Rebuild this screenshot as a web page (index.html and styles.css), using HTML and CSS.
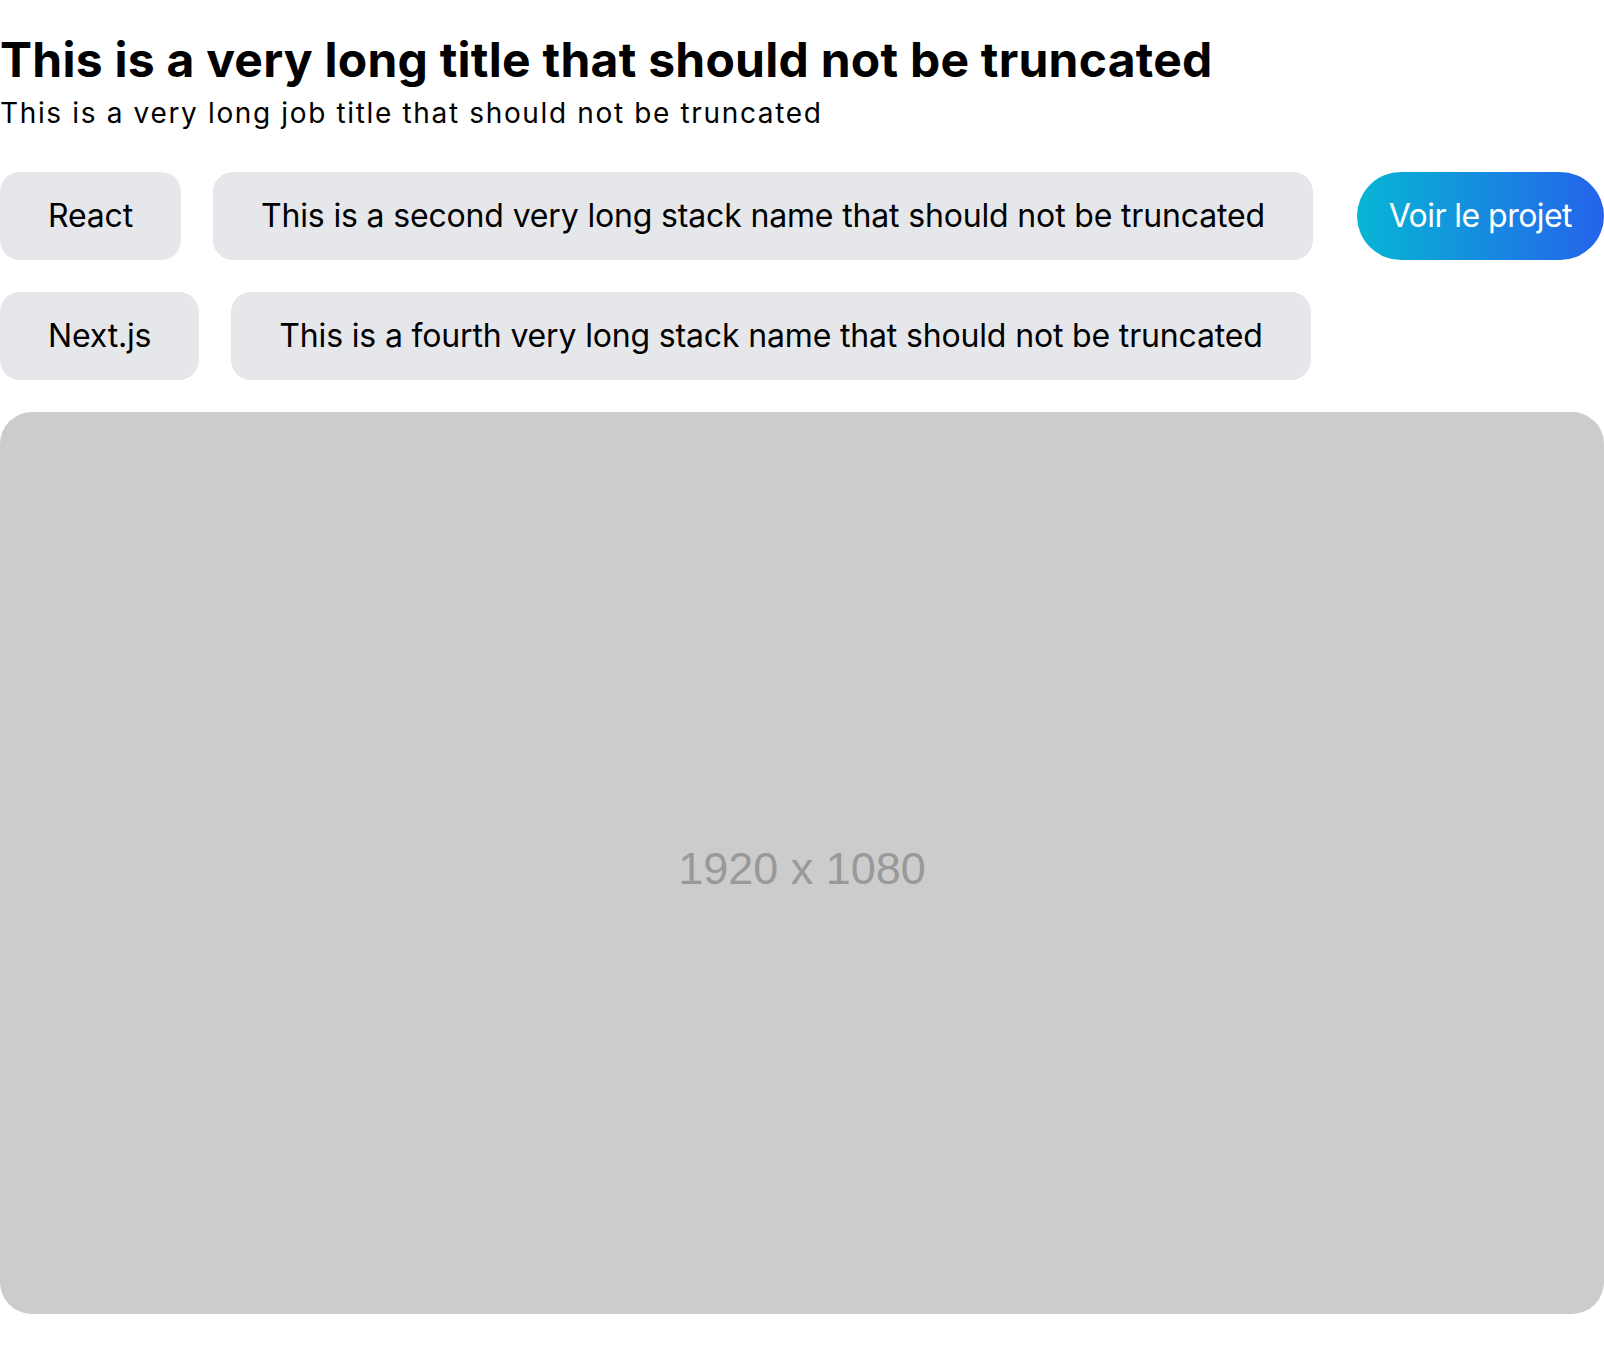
FILE: index.html
```html
<!DOCTYPE html>
<html lang="fr">
<head>
<meta charset="utf-8">
<title>Projet</title>
<link rel="stylesheet" href="styles.css">
</head>
<body>
<main class="page">
  <header class="head">
    <h1 class="title">This is a very long title that should not be truncated</h1>
    <p class="subtitle">This is a very long job title that should not be truncated</p>
  </header>
  <div class="bar">
    <ul class="stack">
      <li class="tag">React</li>
      <li class="tag">This is a second very long stack name that should not be truncated</li>
      <li class="tag">Next.js</li>
      <li class="tag">This is a fourth very long stack name that should not be truncated</li>
    </ul>
    <a class="cta" href="#">Voir le projet</a>
  </div>
  <div class="preview"><span class="preview-label">1920 x 1080</span></div>
</main>
</body>
</html>
```
FILE: styles.css
```css
html, body {
  margin: 0;
  padding: 0;
  background: #ffffff;
}
body {
  font-family: Inter, "Noto Sans", sans-serif;
  color: #000000;
}
.page {
  display: flex;
  flex-direction: column;
  padding-top: 31px;
}
.head {
  display: flex;
  flex-direction: column;
}
.title {
  margin: 0;
  font-size: 48px;
  font-weight: 700;
  line-height: 58px;
  letter-spacing: 0.25px;
}
.subtitle {
  margin: 8px 0 0;
  font-size: 28px;
  font-weight: 400;
  line-height: 32px;
  letter-spacing: 1.65px;
}
.bar {
  display: flex;
  align-items: flex-start;
  gap: 32px;
  margin-top: 43px;
}
.stack {
  flex: 1;
  display: flex;
  flex-wrap: wrap;
  gap: 32px;
  margin: 0;
  padding: 0;
  list-style: none;
}
.tag {
  background: #e5e7eb;
  border-radius: 20px;
  padding: 24px 48px;
  font-size: 32px;
  line-height: 40px;
  letter-spacing: -0.16px;
}
.cta {
  flex-shrink: 0;
  padding: 24px 32px;
  border-radius: 9999px;
  background: linear-gradient(90deg, #06b6d4, #2563eb);
  color: #ffffff;
  font-size: 32px;
  line-height: 40px;
  letter-spacing: -0.55px;
  text-decoration: none;
}
.preview {
  margin-top: 32px;
  box-sizing: border-box;
  aspect-ratio: 16 / 9;
  padding-top: 12px;
  background: #cccccc;
  border-radius: 32px;
  display: flex;
  align-items: center;
  justify-content: center;
}
.preview-label {
  font-family: "Liberation Sans", Arial, sans-serif;
  font-size: 45px;
  color: #999999;
}
```
